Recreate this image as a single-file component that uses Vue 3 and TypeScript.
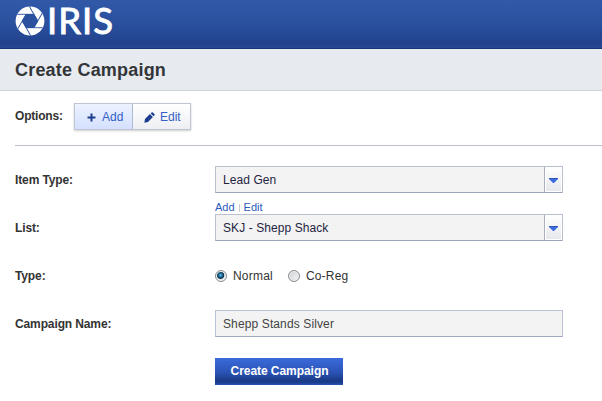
<script setup lang="ts">
import { ref } from 'vue'

const itemType = ref<string>('Lead Gen')
const list = ref<string>('SKJ - Shepp Shack')
const kind = ref<string>('Normal')
const campaignName = ref<string>('Shepp Stands Silver')
const kinds: string[] = ['Normal', 'Co-Reg']
const blades: number[] = [0, 60, 120, 180, 240, 300]
</script>

<template>
  <div class="page">
    <header class="topbar">
      <svg class="logo" width="30" height="30" viewBox="-15 -15 30 30">
        <circle r="14.4" fill="#fff" />
        <polygon points="-8.2,0 -4.1,-7.1 4.1,-7.1 8.2,0 4.1,7.1 -4.1,7.1" fill="#2b519f" />
        <line v-for="a in blades" :key="a" x1="3.8" y1="-6.7" x2="-12.8" y2="-6.7" :transform="`rotate(${a})`" stroke="#2b519f" stroke-width=".9" />
      </svg>
      <span class="brand">IRIS</span>
    </header>
    <div class="heading"><h1>Create Campaign</h1></div>
    <main>
      <div class="options">
        <span class="label options-label">Options:</span>
        <div class="toolbar">
          <button class="tool active">
            <svg width="9" height="9" viewBox="0 0 9 9"><path d="M3.5 0.5h2v3h3v2h-3v3h-2v-3h-3v-2h3z" fill="#1d3d8f" /></svg>
            <span>Add</span>
          </button>
          <button class="tool edit">
            <svg width="11" height="11" viewBox="0 0 11 11"><path d="M0.300 10.700l.7-3.700 4.9-4.900 3 3-4.900 4.900zM6.700 1.400l.8-.8q.7-.6 1.400 0l1.500 1.500q.6.700 0 1.400l-.8.8z" fill="#1d3d8f" /></svg>
            <span>Edit</span>
          </button>
        </div>
      </div>
      <form @submit.prevent>
        <div class="row">
          <span class="label">Item Type:</span>
          <div class="select">
            <span class="value item">{{ itemType }}</span>
            <span class="arrow"><svg width="9" height="5" viewBox="0 0 9 5"><path d="M0 0h9v1L5 5H4L0 1z" fill="#3a6be0" /><path d="M0 0h9v1H0z" fill="#3056b2" /></svg></span>
          </div>
        </div>
        <div class="row">
          <span class="label">List:</span>
          <div class="select">
            <div class="links"><a>Add</a><i></i><a>Edit</a></div>
            <span class="value list">{{ list }}</span>
            <span class="arrow"><svg width="9" height="5" viewBox="0 0 9 5"><path d="M0 0h9v1L5 5H4L0 1z" fill="#3a6be0" /><path d="M0 0h9v1H0z" fill="#3056b2" /></svg></span>
          </div>
        </div>
        <div class="row">
          <span class="label">Type:</span>
          <div class="radios">
            <label v-for="k in kinds" :key="k" @click="kind = k">
              <span class="radio" :class="{ on: kind === k }"></span><span class="radio-text">{{ k }}</span>
            </label>
          </div>
        </div>
        <div class="row">
          <span class="label name">Campaign Name:</span>
          <input v-model="campaignName" class="input" type="text" />
        </div>
        <div class="row"><span class="label"></span><button class="submit">Create Campaign</button></div>
      </form>
    </main>
  </div>
</template>

<style>
body { margin: 0; background: #fff; }
</style>
<style scoped>
* { box-sizing: border-box; }
.page { width: 602px; height: 401px; overflow: hidden; background: #fff; font: 12px "Liberation Sans", Arial, sans-serif; color: #333; }
.topbar { display: flex; height: 49px; padding: 0 0 0 15px; border-bottom: 1px solid #193477; background: linear-gradient(#3159a8, #2a509e 50%, #23428c 90%, #274894); }
.logo { flex: none; margin-top: 6px; }
.brand { font: 400 36.5px/40px Lato, sans-serif; height: 40px; color: #fff; margin-left: 2px; letter-spacing: 1px; -webkit-text-stroke: .9px #fff; }
.heading { height: 42px; padding: 10px 15px 0; background: #e7eaef; border-bottom: 1px solid #cfd1d3; }
h1 { margin: 0; font-size: 18px; line-height: 22px; letter-spacing: .2px; color: #333639; }
main { padding: 12px 0 0 15px; }
.options { display: flex; align-items: center; height: 43px; padding-bottom: 16px; border-bottom: 1px solid #bfbfcb; }
.label { flex: none; width: 200px; font-weight: bold; line-height: 29px; letter-spacing: -.12px; }
.options-label { width: 59px; padding-top: 1px; letter-spacing: -.2px; }
.toolbar { display: flex; width: 117px; height: 27px; border: 1px solid #bfc5d3; box-shadow: 0 1px 2px #0003; }
.tool { display: flex; align-items: center; gap: 6px; width: 57px; height: 25px; padding: 2px 0 0 11px; border: 0; background: linear-gradient(#fff, #edeff2); color: #3460c5; font: 12px "Liberation Sans", sans-serif; }
.tool.edit { gap: 5px; }
.tool.active { width: 58px; padding-left: 12px; border-right: 1px solid #b1b9ce; background: linear-gradient(#edf2ff, #d4e0ff); }
form { display: flex; flex-direction: column; gap: 21px; padding-top: 20px; }
.row { display: flex; height: 27px; }
.select { position: relative; display: flex; width: 348px; height: 27px; border: 1px solid #b9bfcf; border-bottom-color: #9ca5b8; background: #f3f3f3; }
.value { flex: 1; padding-left: 7px; line-height: 26px; color: #242442; letter-spacing: .08px; }
.arrow { display: flex; align-items: center; justify-content: center; width: 18px; border-left: 1px solid #a9afbd; background: linear-gradient(#fff, #e5e7eb); box-shadow: inset 0 0 0 1px #fff; padding-top: 2px; }
.arrow svg { flex: none; }
.links { position: absolute; left: -1px; top: -14px; display: flex; align-items: center; font-size: 11px; line-height: 13px; color: #2c5bbd; }
.links i { width: 1px; height: 8px; margin: 0 4px; background: #ccc; }
.radios { display: flex; align-items: center; gap: 15px; }
.radios label { display: flex; align-items: center; gap: 6px; }
.radio-text { letter-spacing: .2px; }
.radio { width: 12px; height: 12px; border: 1px solid #858b91; border-radius: 50%; background: radial-gradient(circle at 65% 65%, #eee, #c7cbd0); box-shadow: inset 0 0 0 1px #f6f6f6; }
.radio.on { background: radial-gradient(circle at 45% 42%, #76caef 0, #1b6fa0 1.700px, #0b324e 3.300px, #e8e8e8 4.200px); }
.input { width: 348px; height: 27px; padding: 0 7px; border: 1px solid #bac1d5; border-bottom-color: #9faac0; background: #f3f3f3; font: 12px "Liberation Sans", sans-serif; letter-spacing: .12px; color: #444; outline: 0; }
.submit { width: 128px; height: 27px; padding: 0 0 1px 1px; border: 0; background: linear-gradient(#3a6bdd, #2a52b3 55%, #193985 85%, #1b3e92 92%, #2853b8); color: #fff; font: bold 12px "Liberation Sans", sans-serif; letter-spacing: -.05px; }
</style>
